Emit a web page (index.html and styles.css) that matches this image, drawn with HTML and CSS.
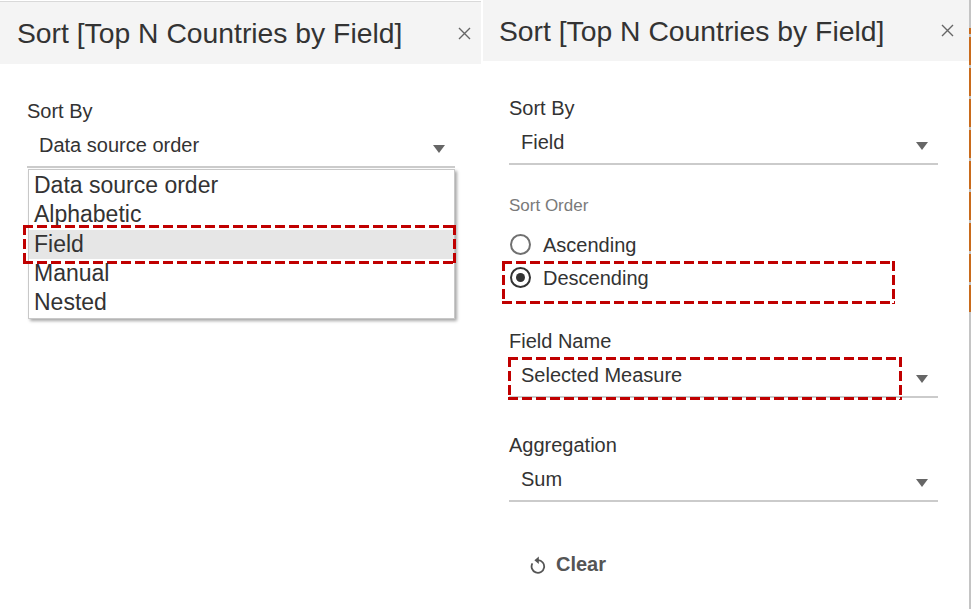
FILE: index.html
```html
<!DOCTYPE html>
<html lang="en">
<head>
<meta charset="utf-8">
<title>Sort dialogs</title>
<link rel="stylesheet" href="styles.css">
</head>
<body>
<div class="screen">
  <section class="panel panel-left">
    <header class="head">
      <h1 class="title">Sort [Top N Countries by Field]</h1>
      <span class="close"><svg width="13" height="13" viewBox="0 0 13 13"><path d="M1 1L12 12M12 1L1 12" stroke="#666" stroke-width="1.4" fill="none"/></svg></span>
    </header>
    <div class="body">
      <div class="label">Sort By</div>
      <div class="select"><span class="value">Data source order</span><span class="caret"></span></div>
      <ul class="menu">
        <li class="item">Data source order</li>
        <li class="item">Alphabetic</li>
        <li class="item active">Field<span class="mark mark-item"></span></li>
        <li class="item">Manual</li>
        <li class="item">Nested</li>
      </ul>
    </div>
  </section>

  <section class="panel panel-right">
    <header class="head">
      <h1 class="title">Sort [Top N Countries by Field]</h1>
      <span class="close"><svg width="13" height="13" viewBox="0 0 13 13"><path d="M1 1L12 12M12 1L1 12" stroke="#666" stroke-width="1.4" fill="none"/></svg></span>
    </header>
    <div class="body">
      <div class="label">Sort By</div>
      <div class="select"><span class="value">Field</span><span class="caret"></span></div>

      <div class="label small">Sort Order</div>
      <div class="radios">
        <div class="radio-row"><span class="radio"></span><span class="radio-text">Ascending</span></div>
        <div class="radio-row"><span class="radio checked"></span><span class="radio-text">Descending</span><span class="mark mark-radio"></span></div>
      </div>

      <div class="label spaced">Field Name</div>
      <div class="select"><span class="value">Selected Measure</span><span class="caret"></span><span class="mark mark-select"></span></div>

      <div class="label spaced">Aggregation</div>
      <div class="select"><span class="value">Sum</span><span class="caret"></span></div>

      <div class="clear">
        <svg class="clear-icon" width="16" height="20" viewBox="0 0 16 20"><path d="M8 6.2A6.3 6.3 0 1 1 2.4 9.4" stroke="#555" stroke-width="1.8" fill="none"/><path d="M8.8 2.4L4.4 6.2L8.8 10Z" fill="#555"/></svg>
        <span class="clear-text">Clear</span>
      </div>
    </div>
  </section>

  <div class="edge"><div class="edge-bar"></div></div>
</div>
</body>
</html>
```

FILE: styles.css
```css
* { box-sizing: border-box; }

html, body {
  margin: 0;
  padding: 0;
  background: #ffffff;
}

body {
  font-family: "Liberation Sans", Arial, sans-serif;
  color: #333333;
  width: 971px;
  height: 609px;
  overflow: hidden;
}

.screen {
  display: flex;
  height: 609px;
}

.panel {
  display: flex;
  flex-direction: column;
}

.panel-left {
  width: 481px;
  padding-top: 1px;
}

.panel-right {
  width: 486px;
  margin-left: 2px;
}

.head {
  display: flex;
  align-items: center;
  justify-content: space-between;
  background: #f4f4f4;
}

.panel-left .head {
  height: 63px;
  border-top: 1px solid #d9d9d9;
  padding: 0 10px 0 17px;
}

.panel-right .head {
  height: 61px;
  padding: 0 15px 0 16px;
}

.title {
  margin: 0;
  font-size: 28.3px;
  line-height: 32px;
  font-weight: normal;
  color: #333333;
  white-space: nowrap;
}

.close {
  display: flex;
  width: 13px;
  height: 13px;
}

.panel-left .close { margin-top: 1px; }

.body {
  display: flex;
  flex-direction: column;
  padding-top: 35px;
}

.panel-left .body { padding-left: 27px; padding-right: 26px; }
.panel-right .body { padding-left: 26px; padding-right: 31px; }

.label {
  font-size: 20px;
  line-height: 24px;
  color: #333333;
}

.label.small {
  font-size: 17px;
  line-height: 20px;
  color: #7a7a7a;
  margin-top: 31px;
}

.label.spaced {
  margin-top: 35px;
}

.select {
  position: relative;
  display: flex;
  align-items: center;
  padding: 10px 10px 9px 12px;
  border-bottom: 2px solid #cbcbcb;
}

.value {
  flex: 1;
  font-size: 20px;
  line-height: 24px;
  color: #333333;
}

.caret {
  width: 0;
  height: 0;
  margin-top: 7px;
  border-left: 6.5px solid transparent;
  border-right: 6.5px solid transparent;
  border-top: 8px solid #666666;
}

.menu {
  list-style: none;
  margin: 1px 0 0 1px;
  padding: 1px 0;
  border: 1px solid #c8c8c8;
  box-shadow: 2px 2px 3px rgba(0, 0, 0, 0.35);
  background: #ffffff;
}

.item {
  position: relative;
  font-size: 23px;
  line-height: 29.25px;
  padding-left: 5px;
  color: #333333;
}

.item.active {
  background: #e6e6e6;
}

/* red dashed annotation boxes */
.mark {
  position: absolute;
  pointer-events: none;
  background:
    repeating-linear-gradient(90deg, #c00000 0 10px, transparent 10px 14px) left top / 100% 3px no-repeat,
    repeating-linear-gradient(90deg, #c00000 0 10px, transparent 10px 14px) left bottom / 100% 3px no-repeat,
    repeating-linear-gradient(180deg, #c00000 0 10px, transparent 10px 14px) left top / 3px 100% no-repeat,
    repeating-linear-gradient(180deg, #c00000 0 10px, transparent 10px 14px) right top / 3px 100% no-repeat;
}

.mark-item { top: -5px; bottom: -5px; left: -6px; right: -2px; }
.mark-radio { top: 0; bottom: -10px; left: -7px; right: 43px; }
.mark-select { top: 4px; bottom: -4px; left: -1px; right: 36px; }

.radios {
  display: flex;
  flex-direction: column;
  margin-top: 12px;
}

.radio-row {
  position: relative;
  display: flex;
  align-items: center;
  height: 33px;
  padding-left: 1px;
}

.radio {
  width: 21px;
  height: 21px;
  border-radius: 50%;
  border: 2px solid #707070;
  display: flex;
  align-items: center;
  justify-content: center;
}

.radio.checked {
  border-color: #333333;
}

.radio.checked::after {
  content: "";
  width: 9px;
  height: 9px;
  border-radius: 50%;
  background: #333333;
}

.radio-text {
  margin-left: 12px;
  font-size: 20px;
  line-height: 24px;
  color: #333333;
}

.clear {
  display: flex;
  align-items: center;
  margin-top: 50px;
  padding-left: 21px;
  gap: 10px;
}

.clear-icon { display: block; }

.clear-text {
  font-size: 20px;
  line-height: 24px;
  font-weight: bold;
  color: #555555;
}

.edge {
  width: 2px;
  background: #c4c4c4;
  padding-top: 28px;
}

.edge-bar {
  height: 284px;
  background: repeating-linear-gradient(180deg, #c96b1c 0 6px, #c4c4c4 6px 9px, #c96b1c 9px 31px);
}
```
